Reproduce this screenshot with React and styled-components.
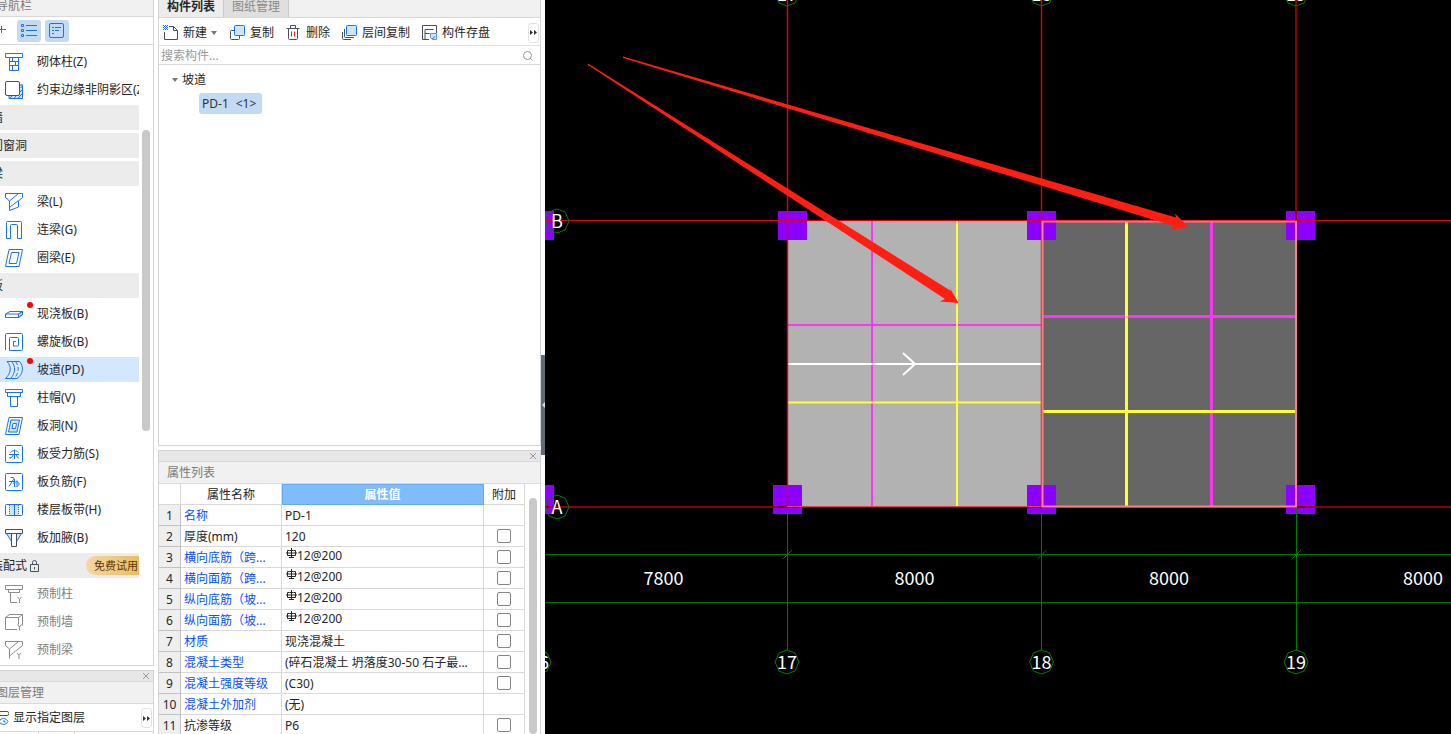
import React, { useState } from 'react';
import styled, { createGlobalStyle, css } from 'styled-components';

const GlobalStyle = createGlobalStyle`
  * {
    box-sizing: border-box;
  }

  html,
  body,
  #root {
    height: 100%;
    margin: 0;
  }

  body {
    overflow: hidden;
    background: #ffffff;
    color: #262626;
    font: 12px/20px "Noto Sans", "Noto Sans CJK SC", sans-serif;
  }

  button,
  input {
    font: inherit;
    color: inherit;
    margin: 0;
  }
`;

const Shell = styled.div`
  display: flex;
  height: 100vh;
  overflow: hidden;
`;

/* The docked navigation runs a little past the left edge of the window */
const Sidebar = styled.aside`
  display: flex;
  flex: none;
  flex-direction: column;
  gap: 4px;
  width: 170px;
  margin-left: -16px;
`;

const Dock = styled.section`
  display: flex;
  flex-direction: column;
  flex: ${({ $grow }) => ($grow ? '1 1 0' : 'none')};
  min-height: 0;
  overflow: hidden;
  border: solid #d4d4d4;
  border-width: ${({ $first }) => ($first ? '0 1px 1px' : '1px 1px 0')};
`;

const DockTitle = styled.h2`
  flex: none;
  height: ${({ $first }) => ($first ? '17px' : '22px')};
  margin: 0;
  padding-left: ${({ $inset }) => ($inset ? '11px' : '8px')};
  border-bottom: 1px solid #d9d9d9;
  background: #f1f1f1;
  color: #7a7a7a;
  font-size: 12px;
  font-weight: 400;
  line-height: ${({ $first }) => ($first ? '12px' : '21px')};
`;

const DockStrip = styled.div`
  display: flex;
  flex: none;
  justify-content: flex-end;
  align-items: center;
  height: 11px;
  padding-right: 3px;
  border-bottom: 1px solid #d9d9d9;
  background: #e7e7e7;
`;

const CloseButton = styled.button`
  display: flex;
  padding: 0;
  border: 0;
  background: none;
  color: #9a9a9a;
`;

const NavTools = styled.div`
  display: flex;
  flex: none;
  align-items: center;
  gap: 4px;
  height: 28px;
  padding-left: 4px;
  border-bottom: 1px solid #d9d9d9;
`;

const NavTool = styled.button`
  display: grid;
  place-items: center;
  width: 24px;
  height: 22px;
  padding: 0;
  border: 0;
  border-radius: 3px;
  background: ${({ $on }) => ($on ? '#c2daf2' : 'transparent')};
`;

const NavBody = styled.div`
  display: flex;
  flex: 1;
  min-height: 0;
`;

const NavList = styled.nav`
  display: flex;
  flex: 1;
  flex-direction: column;
  gap: 3px;
  min-width: 0;
  padding-top: 4px;
  overflow: hidden;
`;

const navRow = css`
  position: relative;
  display: flex;
  flex: none;
  align-items: center;
  height: 25px;
  overflow: hidden;
  white-space: nowrap;
`;

const NavItem = styled.a`
  ${navRow}
  gap: 14px;
  padding-left: 20px;
  background: ${({ $selected }) => ($selected ? '#d3e7ff' : 'transparent')};
  color: ${({ $locked }) => ($locked ? '#7f7f7f' : '#262626')};
  text-decoration: none;

  svg {
    flex: none;
  }
`;

const NavCategory = styled.h3`
  ${navRow}
  gap: 3px;
  margin: 0;
  padding-left: 6px;
  background: #ececec;
  font-size: 12px;
  font-weight: 400;
`;

const NewDot = styled.span`
  position: absolute;
  top: 1px;
  left: 42px;
  width: 6px;
  height: 6px;
  border-radius: 50%;
  background: #ff0000;
`;

const TrialButton = styled.button`
  width: 53px;
  height: 19px;
  margin-left: auto;
  padding: 0 0 0 8px;
  border: 0;
  border-radius: 10px 0 0 10px;
  background: linear-gradient(90deg, #f5d6a6, #e9bd60);
  color: #5d3408;
  font-size: 11px;
  line-height: 19px;
  text-align: left;
  white-space: nowrap;
`;

const Track = styled.div`
  flex: none;
  width: ${({ $narrow }) => ($narrow ? '15px' : '14px')};
  padding: ${({ $narrow }) => ($narrow ? '14px 3px 0 4px' : '85px 3px 0')};
`;

const Thumb = styled.div`
  height: ${({ $full }) => ($full ? '100%' : '301px')};
  border-radius: 4px;
  background: #c9c9c9;
`;

const LayerRow = styled.div`
  display: flex;
  flex: none;
  align-items: center;
  justify-content: space-between;
  height: 28px;
  padding: 1px 1px 0 12px;
  border-bottom: 1px solid #d9d9d9;
`;

const LayerButton = styled.button`
  display: flex;
  align-items: center;
  gap: 4px;
  padding: 0;
  border: 0;
  background: none;
  white-space: nowrap;
`;

const MoreButton = styled.button`
  display: grid;
  place-items: center;
  width: 11px;
  height: 20px;
  padding: 0;
  border: 1px solid #e4e4e4;
  border-radius: 3px;
  background: #ffffff;
  color: #333333;
`;

const LayerCells = styled.div`
  display: grid;
  grid-template-columns: 54px 36px 1fr;
  height: 2px;

  span {
    border-right: 1px solid #d9d9d9;
  }
`;

const Middle = styled.main`
  display: flex;
  flex: none;
  flex-direction: column;
  gap: 4px;
  width: 383px;
  margin-left: 4px;
`;

const Tabs = styled.div`
  display: flex;
  flex: none;
  height: 18px;
  border-bottom: 1px solid #d9d9d9;
  background: #f1f1f1;
`;

const Tab = styled.button`
  padding: 0 8px 3px;
  border: 0;
  border-right: 1px solid #c9c9c9;
  background: ${({ $active }) => ($active ? '#ececec' : '#dfdfdf')};
  color: ${({ $active }) => ($active ? '#262626' : '#8a8a8a')};
  font-weight: ${({ $active }) => ($active ? 700 : 400)};
  line-height: 12px;
`;

const ListTools = styled.div`
  display: flex;
  flex: none;
  align-items: center;
  gap: 12px;
  height: 28px;
  padding: 2px 1px 0 4px;
  border-bottom: 1px solid #e2e2e2;

  ${MoreButton} {
    margin-left: auto;
  }
`;

const ToolButton = styled.button`
  display: flex;
  align-items: center;
  gap: 4px;
  padding: 0;
  border: 0;
  background: none;
  white-space: nowrap;
`;

const SearchBox = styled.label`
  display: flex;
  flex: none;
  align-items: center;
  height: 19px;
  padding: 1px 6px 0 2px;
  border-bottom: 1px solid #d9d9d9;

  input {
    flex: 1;
    min-width: 0;
    height: 17px;
    padding: 0;
    border: 0;
    outline: 0;
    background: none;
  }

  input::placeholder {
    color: #999999;
    opacity: 1;
  }
`;

const Tree = styled.div`
  display: flex;
  flex: 1;
  flex-direction: column;
  align-items: flex-start;
  gap: 3px;
  min-height: 0;
  padding: 5px 0 0 13px;
`;

const TreeNode = styled.button`
  display: flex;
  align-items: center;
  gap: 3px;
  padding: 0;
  border: 0;
  background: none;
`;

const TreeLeaf = styled.button`
  display: flex;
  align-items: center;
  gap: 7px;
  height: 21px;
  margin-left: 27px;
  padding: 0 6px 0 3px;
  border: 0;
  border-radius: 3px;
  background: #c2daf2;
  color: #333333;
`;

const PropertyBody = styled.div`
  display: flex;
  height: 250px;
  overflow: hidden;
`;

const PropertyTable = styled.table`
  flex: 1;
  width: 100%;
  height: min-content;
  border-collapse: separate;
  border-spacing: 0;
  table-layout: fixed;

  th,
  td {
    height: 21px;
    padding: 2px 3px 0;
    overflow: hidden;
    border: solid #d9d9d9;
    border-width: 0 1px 1px 0;
    font-weight: 400;
    line-height: 18px;
    text-align: left;
    white-space: nowrap;
  }

  thead th {
    text-align: center;
  }
`;

const IndexCell = styled.th`
  && {
    padding: 2px 0 0;
    border-color: #c2c2c2;
    background: #efefef;
    text-align: center;
  }
`;

const NameCell = styled.td`
  color: ${({ $link }) => ($link ? '#0a50ff' : '#262626')};
`;

const ValueHead = styled.th`
  && {
    border-color: #66a9ee;
    background: #80bbfb;
    box-shadow: inset 1px 1px #66a9ee;
    color: #ffffff;
    font-weight: 700;
  }
`;

const ValueCell = styled.td`
  && {
    padding-top: ${({ $rebar }) => ($rebar ? '0' : '2px')};
    vertical-align: ${({ $rebar }) => ($rebar ? 'top' : 'middle')};
  }
`;

const RebarMark = styled.svg`
  width: 11px;
  height: 12px;
  margin-left: 1px;
`;

const CheckCell = styled.td`
  && {
    padding-top: 0;
  }
`;

const CheckBox = styled.input.attrs({ type: 'checkbox' })`
  appearance: none;
  display: block;
  width: 14px;
  height: 14px;
  margin: 0 auto;
  border: 1px solid #858585;
  border-radius: 2px;
  background: #ffffff;

  &:checked {
    background: #1b74e4;
  }
`;

const Splitter = styled.div`
  display: flex;
  flex: none;
  align-items: center;
  width: 4px;
  padding-top: 76px;
`;

const SplitHandle = styled.button`
  display: grid;
  place-items: center end;
  width: 4px;
  height: 100px;
  padding: 0;
  border: 0;
  background: #5f6b78;
`;

const Viewport = styled.section`
  flex: 1;
  min-width: 0;
  background: #000000;

  svg {
    display: block;
    width: 100%;
    height: 100%;
  }

  text {
    fill: #ffffff;
    font-family: "Noto Sans CJK SC", sans-serif;
    font-size: 18px;
    text-anchor: middle;
  }
`;

const BLUE = '#1b74e4';
const SLATE = '#46505f';
const TINT = '#cfe3fb';

const Glyph = ({ size = 18, color = BLUE, children }) => (
  <svg width={size} height={size} viewBox={`0 0 ${size} ${size}`} fill="none" stroke={color} aria-hidden="true">
    {children}
  </svg>
);

const icons = {
  masonry: (
    <Glyph>
      <path d="M.5.5h17v4H.5z" />
      <path d="M4.5 4.5v13h9v-13M4.5 8.5h9M4.5 12.5h9M7.5 4.5v4M10.5 8.5v4M7.5 12.5v5" />
    </Glyph>
  ),
  edge: (
    <Glyph>
      <path d="M15 3h2.500v14.500H4V15" fill={TINT} stroke="none" />
      <path d="M15 4h2.500v13.500H4V15M15.500 7l2-2M15 11l2.500-2.500M15 15l2.500-2.500M5 17l2-2M9 17.500l2-2.500M13 17.500l2-2.500" />
      <rect x=".5" y=".5" width="14" height="14" rx="1.500" stroke={SLATE} fill="#fff" />
    </Glyph>
  ),
  beam: (
    <Glyph>
      <path d="M.5 4.500v-4h17v4l-4 3.500v6L4.500 17.500V8zM4.500 8l9-7.500M4.500 14.500l9-7" />
    </Glyph>
  ),
  link: (
    <Glyph>
      <path d="M1.500 17.500v-16a1 1 0 0 1 1-1h13a1 1 0 0 1 1 1v16h-4V4.500a1 1 0 0 0-1-1h-5a1 1 0 0 0-1 1v13z" />
    </Glyph>
  ),
  ring: (
    <Glyph>
      <path d="M4 .5h13.500l-3.500 17H.5zM6.500 3.500h7.500l-2.500 11H4z" />
    </Glyph>
  ),
  slab: (
    <Glyph>
      <path d="M13.500 9l4-2.500v3l-4 3z" fill={TINT} />
      <path d="M.5 9l4.500-2.500h12.500v3l-4 3H.5zM.5 9h13l4-2.500M13.500 9v3.500" />
    </Glyph>
  ),
  spiral: (
    <Glyph>
      <path d="M.5 17V1.500a1 1 0 0 1 1-1h15a1 1 0 0 1 1 1v15a1 1 0 0 1-1 1h-12v-12a1 1 0 0 1 1-1h7a1 1 0 0 1 1 1V12a1 1 0 0 1-1 1H8.500V8.500H11" />
    </Glyph>
  ),
  ramp: (
    <Glyph>
      <path d="M2 .5c5 5 4 12-1.500 17H12C18.500 13 19 5.500 14.500.5z" fill="#dcecff" stroke="none" />
      <path d="M2 .5h4.500c4.500 5 4 12-1 17h-5C6 12.500 7 5.500 2 .5zM14.500.5C19 5.500 18.500 13 12 17.500H5.500M6.500.5h8" />
      <path d="M10.500.5c4 5 3.500 12-1.500 17" strokeDasharray="4 2" />
    </Glyph>
  ),
  cap: (
    <Glyph>
      <path d="M.5.5h17v3H.5zM2.500 3.500v4h13v-4M5.500 7.500v10h7v-10" />
    </Glyph>
  ),
  opening: (
    <Glyph>
      <path d="M4 .5h13.500l-3.500 17H.5z" />
      <path d="M6 3h8.500L12 15H3.500z" fill={TINT} />
      <path d="M8 6.500h3.500l-1 5H7z" fill="#fff" />
    </Glyph>
  ),
  rebarS: (
    <Glyph>
      <rect x=".5" y=".5" width="17" height="17" rx="1" />
      <path d="M5.500 7.500c2-2.500 6-2.500 8 0M4 9.500h10M4 13c3 0 4-1.500 4-4M9.500 4.500V14M11.500 9.500c0 2 1 3.500 2.500 3.500" />
    </Glyph>
  ),
  rebarF: (
    <Glyph>
      <rect x=".5" y=".5" width="17" height="17" rx="1" />
      <path d="M5.500 4.500H8c1 0 1 1 .5 2L4 13.500M4 8.500h5M9.500 6v8M8 10.500c3-2.500 6-2 6 0 0 2-1.500 3-3.500 3M12 7.500v5" />
    </Glyph>
  ),
  strip: (
    <Glyph>
      <path d="M4 3.500h10v11H4z" fill={TINT} stroke="none" />
      <rect x=".5" y="3.500" width="17" height="11" rx="1" />
      <path d="M9.500 3.500v11" />
      <path d="M4.500 4v11M13.500 4v11" strokeDasharray="1 1" />
    </Glyph>
  ),
  haunch: (
    <Glyph>
      <path d="M1.500 4.500l5 8v-8zM16.500 4.500l-5 8v-8z" fill={TINT} />
      <path d="M.5.5h17v4H.5zM6.500 4.500v13h5v-13" stroke={SLATE} fill="#fff" />
    </Glyph>
  ),
  precastColumn: (
    <Glyph color="#8c8c8c">
      <path d="M.5.5h17v4H.5zM3.500 4.500v3h11v-3M5.500 7.500v10H12M12.500 12l2 2.500 2-2.500M14.500 14.500V18" />
    </Glyph>
  ),
  precastWall: (
    <Glyph color="#8c8c8c">
      <path d="M12 16.500H.5v-12h13v7M.5 4.500l4-3h13v11M13.500 4.500l4-3M12.500 11.500l2 2.500 2-2.500M14.500 14v3.500" />
    </Glyph>
  ),
  precastBeam: (
    <Glyph color="#8c8c8c">
      <path d="M4.500 17.500V8L.5 4.500v-4h17v4L4.500 15M4.500 8l9-7.500M12 12l2 2.500 2-2.500M14 14.500V18" />
    </Glyph>
  ),
  create: (
    <Glyph size={16} color={SLATE}>
      <path d="M6 1.500h4.500l4 4v9H1.500V7M10.500 1.500v4h4" />
      <path d="M0 0h1v1H0zM2 0h1v1H2zM4 0h1v1H4zM1 1h1v1H1zM3 1h1v1H3zM0 2h1v1H0zM2 2h1v1H2zM4 2h1v1H4zM1 3h1v1H1zM3 3h1v1H3zM0 4h1v1H0zM2 4h1v1H2zM4 4h1v1H4z" stroke="none" fill={BLUE} />
    </Glyph>
  ),
  copy: (
    <Glyph size={16} color={SLATE}>
      <path d="M4 5.500H1.500a1 1 0 0 0-1 1v7a1 1 0 0 0 1 1h7a1 1 0 0 0 1-1V11" />
      <rect x="4.500" y=".5" width="10" height="10" rx="1" stroke={BLUE} fill={TINT} />
    </Glyph>
  ),
  remove: (
    <Glyph size={16} color={SLATE}>
      <path d="M.5 3.500h13M4.500 3V.500h5V3M2.500 3.500v10a1 1 0 0 0 1 1h7a1 1 0 0 0 1-1v-10" />
      <path d="M5.500 6.500v5M8.500 6.500v5" stroke="#e02020" />
    </Glyph>
  ),
  floorCopy: (
    <Glyph size={16} color={SLATE}>
      <path d="M.5 7v6.500a1 1 0 0 0 1 1H9M2.500 4v7.500a1 1 0 0 0 1 1H12" />
      <rect x="4.500" y=".5" width="10" height="10" rx="1" stroke={BLUE} fill={TINT} />
    </Glyph>
  ),
  store: (
    <Glyph size={16} color={SLATE}>
      <path d="M7 14.500H.5V.5h14V8M3 4.500h8.500M3 4.500v10M3 8.500h4.500" />
      <path d="M8.500 8.500h6v6h-4l-2-2z" stroke="#5b92e8" fill={TINT} />
      <path d="M10 14l3-2.500" stroke={BLUE} />
    </Glyph>
  ),
};

const CloseMark = () => (
  <svg width="8" height="8" viewBox="0 0 8 8" stroke="currentColor" aria-hidden="true">
    <path d="M1 1l6 6M7 1l-6 6" />
  </svg>
);

const MoreMark = () => (
  <svg width="7" height="5" viewBox="0 0 7 5" fill="currentColor" aria-hidden="true">
    <path d="M0 0l3 2.500L0 5zM4 0l3 2.500L4 5z" />
  </svg>
);

const Caret = () => (
  <svg width="7" height="4" viewBox="0 0 7 4" fill="#777" aria-hidden="true">
    <path d="M0 0h6L3 4z" />
  </svg>
);

const navRows = [
  { label: '砌体柱(Z)', icon: 'masonry' },
  { label: '约束边缘非阴影区(Z)', icon: 'edge' },
  { category: '墙' },
  { category: '门窗洞' },
  { category: '梁' },
  { label: '梁(L)', icon: 'beam' },
  { label: '连梁(G)', icon: 'link' },
  { label: '圈梁(E)', icon: 'ring' },
  { category: '板' },
  { label: '现浇板(B)', icon: 'slab', dot: true },
  { label: '螺旋板(B)', icon: 'spiral' },
  { label: '坡道(PD)', icon: 'ramp', dot: true, selected: true },
  { label: '柱帽(V)', icon: 'cap' },
  { label: '板洞(N)', icon: 'opening' },
  { label: '板受力筋(S)', icon: 'rebarS' },
  { label: '板负筋(F)', icon: 'rebarF' },
  { label: '楼层板带(H)', icon: 'strip' },
  { label: '板加腋(B)', icon: 'haunch' },
  { category: '装配式', trial: true },
  { label: '预制柱', icon: 'precastColumn', locked: true },
  { label: '预制墙', icon: 'precastWall', locked: true },
  { label: '预制梁', icon: 'precastBeam', locked: true },
];

const properties = [
  { name: '名称', value: 'PD-1', link: true },
  { name: '厚度(mm)', value: '120', check: true },
  { name: '横向底筋（跨...', value: '12@200', link: true, rebar: true, check: true },
  { name: '横向面筋（跨...', value: '12@200', link: true, rebar: true, check: true },
  { name: '纵向底筋（坡...', value: '12@200', link: true, rebar: true, check: true },
  { name: '纵向面筋（坡...', value: '12@200', link: true, rebar: true, check: true },
  { name: '材质', value: '现浇混凝土', link: true, check: true },
  { name: '混凝土类型', value: '(碎石混凝土 坍落度30-50 石子最...', link: true, check: true },
  { name: '混凝土强度等级', value: '(C30)', link: true, check: true },
  { name: '混凝土外加剂', value: '(无)', link: true },
  { name: '抗渗等级', value: 'P6', check: true },
];

const NavPanel = () => (
  <Dock $grow $first>
    <DockTitle $first $inset>导航栏</DockTitle>
    <NavTools>
      <NavTool aria-label="添加">
        <Glyph size={16}>
          <path d="M8.500 3v7M5 6.500h8M1 12.500h6" />
        </Glyph>
      </NavTool>
      <NavTool $on aria-label="列表">
        <Glyph size={16}>
          <path d="M.5 1.500h2v2h-2zM.5 6.500h2v2h-2zM.5 11.500h2v2h-2zM5 2.500h11M5 7.500h11M5 12.500h11" />
        </Glyph>
      </NavTool>
      <NavTool $on aria-label="详情">
        <Glyph size={16}>
          <rect x=".5" y=".5" width="14" height="14" rx="1.500" />
          <path d="M3 4.500h2M6 4.500h6M3 7.500h2M6 7.500h4M3 10.500h2" />
        </Glyph>
      </NavTool>
    </NavTools>
    <NavBody>
      <NavList>
        {navRows.map((row) =>
          row.category ? (
            <NavCategory key={row.category}>
              {row.category}
              {row.trial && (
                <>
                  <svg width="9" height="12" viewBox="0 0 9 12" fill="none" stroke={SLATE} aria-hidden="true">
                    <path d="M.5 4.500h8v7h-8zM2.500 4.500v-2a2 2 0 0 1 4 0v2M4.500 7v2.500" />
                  </svg>
                  <TrialButton>免费试用</TrialButton>
                </>
              )}
            </NavCategory>
          ) : (
            <NavItem key={row.label} href="#" $selected={row.selected} $locked={row.locked}>
              {icons[row.icon]}
              {row.label}
              {row.dot && <NewDot />}
            </NavItem>
          )
        )}
      </NavList>
      <Track>
        <Thumb />
      </Track>
    </NavBody>
  </Dock>
);

const LayerPanel = () => (
  <Dock>
    <DockStrip>
      <CloseButton aria-label="关闭图层管理">
        <CloseMark />
      </CloseButton>
    </DockStrip>
    <DockTitle $inset>图层管理</DockTitle>
    <LayerRow>
      <LayerButton>
        <svg width="12" height="16" viewBox="0 0 12 16" fill="none" stroke={BLUE} aria-hidden="true">
          <path d="M1 1.500h9a1.500 1.500 0 0 1 0 4H1" stroke={SLATE} />
          <path d="M2 11.500c2-4 7-4 9 0-2 4-7 4-9 0zM7 10v2h1.500" />
        </svg>
        显示指定图层
      </LayerButton>
      <MoreButton aria-label="更多图层工具">
        <MoreMark />
      </MoreButton>
    </LayerRow>
    <LayerCells>
      <span />
      <span />
    </LayerCells>
  </Dock>
);

const ComponentPanel = () => (
  <Dock $grow $first>
    <Tabs>
      <Tab $active>构件列表</Tab>
      <Tab>图纸管理</Tab>
    </Tabs>
    <ListTools>
      <ToolButton>
        {icons.create}
        新建
        <Caret />
      </ToolButton>
      <ToolButton>{icons.copy}复制</ToolButton>
      <ToolButton>{icons.remove}删除</ToolButton>
      <ToolButton>{icons.floorCopy}层间复制</ToolButton>
      <ToolButton>{icons.store}构件存盘</ToolButton>
      <MoreButton aria-label="更多工具">
        <MoreMark />
      </MoreButton>
    </ListTools>
    <SearchBox>
      <input type="text" aria-label="搜索构件" placeholder="搜索构件..." />
      <svg width="12" height="12" viewBox="0 0 12 12" fill="none" stroke="#999" aria-hidden="true">
        <circle cx="5.500" cy="5.500" r="4" />
        <path d="M8.500 8.500l2 2" />
      </svg>
    </SearchBox>
    <Tree>
      <TreeNode>
        <Caret />
        坡道
      </TreeNode>
      <TreeLeaf>
        <span>PD-1</span>
        <span>&lt;1&gt;</span>
      </TreeLeaf>
    </Tree>
  </Dock>
);

const PropertyPanel = () => {
  const [checked, setChecked] = useState({});

  return (
    <Dock>
      <DockStrip>
        <CloseButton aria-label="关闭属性列表">
          <CloseMark />
        </CloseButton>
      </DockStrip>
      <DockTitle>属性列表</DockTitle>
      <PropertyBody>
        <PropertyTable>
          <colgroup>
            <col width="22" />
            <col width="101" />
            <col />
            <col width="41" />
          </colgroup>
          <thead>
            <tr>
              <th aria-label="序号" />
              <th>属性名称</th>
              <ValueHead>属性值</ValueHead>
              <th>附加</th>
            </tr>
          </thead>
          <tbody>
            {properties.map((item, i) => (
              <tr key={item.name}>
                <IndexCell scope="row">{i + 1}</IndexCell>
                <NameCell $link={item.link}>{item.name}</NameCell>
                <ValueCell $rebar={item.rebar}>
                  {item.rebar && (
                    <RebarMark viewBox="0 0 11 12" fill="none" stroke="#262626" aria-hidden="true">
                      <path d="M5.500 0v10M3.500 2.500h-2v5h8v-5h-2M0 5h11M3.500 2.500h4M3 9.500h5" />
                    </RebarMark>
                  )}
                  {item.value}
                </ValueCell>
                <CheckCell>
                  {item.check && (
                    <CheckBox
                      aria-label={`附加 ${item.name}`}
                      checked={!!checked[i]}
                      onChange={(e) => setChecked({ ...checked, [i]: e.target.checked })}
                    />
                  )}
                </CheckCell>
              </tr>
            ))}
          </tbody>
        </PropertyTable>
        <Track $narrow>
          <Thumb $full />
        </Track>
      </PropertyBody>
    </Dock>
  );
};

// Drawing coordinates: x of the numbered axes, y of the lettered ones
const axes = [
  { x: -6, name: '16' },
  { x: 242, name: '17' },
  { x: 496.5, name: '18' },
  { x: 751, name: '19' },
];
const spans = [
  { x: 118.5, text: '7800' },
  { x: 369.5, text: '8000' },
  { x: 624, text: '8000' },
  { x: 878, text: '8000' },
];
const columns = [
  [-20, 211], [-20, 485],
  [233, 211], [228, 485],
  [482, 211], [482, 485],
  [741, 211], [741, 485],
];

const AxisBubble = ({ x, y, name }) => (
  <>
    <polygon
      points="0,-12 8,-9 12,0 8,9 0,12 -8,9 -12,0 -8,-9"
      transform={`translate(${x} ${y})`}
      fill="none"
      stroke="#008000"
    />
    <text x={x} y={y + 7}>{name}</text>
  </>
);

const PlanView = () => (
  <Viewport aria-label="平面图">
    <svg viewBox="0 0 906 734" preserveAspectRatio="xMinYMin slice">
      <rect x="242.500" y="220.500" width="254" height="286" fill="#b2b2b2" />
      <rect x="497" y="220.500" width="254" height="286" fill="#666666" />
      {columns.map(([x, y]) => (
        <rect key={`${x}-${y}`} x={x} y={y} width="29" height="29" fill="#8b00ff" />
      ))}

      <g stroke="#007a00">
        <path d="M0 554.500h906M0 602.500h906" />
        {axes.map(({ x }) => (
          <path key={x} d={`M${Math.floor(x) + 0.5} 507v143M${x - 4} 559l9-9`} />
        ))}
      </g>

      <g stroke="#ff35f5" strokeWidth="2">
        <path d="M243 325h254M327 221v286" />
        <path d="M496 316.500h256M666.500 220v288" strokeWidth="3" />
      </g>
      <g stroke="#ffff32" strokeWidth="2">
        <path d="M243 402.500h254M412 221v286" />
        <path d="M498 411.500h252M581.500 222v284" strokeWidth="3" />
      </g>
      <path d="M243 364h254M358 353l12 11-12 11" fill="none" stroke="#ffffff" strokeWidth="2" />

      <g stroke="#dc0012">
        <line x1="0" y1="220.500" x2="906" y2="220.500" />
        <line x1="242.500" y1="0" x2="242.500" y2="507" strokeWidth="1.400" />
        <line x1="496.500" y1="0" x2="496.500" y2="507" strokeWidth="1.400" />
      </g>
      <g stroke="#8c0000" strokeWidth="2">
        <line x1="0" y1="507" x2="906" y2="507" />
        <line x1="751" y1="0" x2="751" y2="220" />
      </g>
      <path d="M242 506.500h255" stroke="#e04050" />
      <path d="M497.500 221.500h253.500v285H497.500z" fill="none" stroke="#ff8080" strokeWidth="2" />
      <path d="M496 220.500h256" stroke="#ff2030" />

      {axes.map(({ x, name }) => (
        <React.Fragment key={name}>
          <AxisBubble x={x} y={662} name={name} />
          {x > 0 && <AxisBubble x={x} y={-6} name={name} />}
        </React.Fragment>
      ))}
      <AxisBubble x={12} y={221} name="B" />
      <AxisBubble x={12} y={507} name="A" />
      {spans.map(({ x, text }) => (
        <text key={x} x={x} y="585">{text}</text>
      ))}

      <g fill="#ff1f12">
        <path d="M43 63.500L406 291l-2-4.500L413.500 303l-18.500-1.500 5-2.500L43 65z" />
        <path d="M78 56.500L631 217.500l-1-4L643.500 227l-18.500 3 4-4L78 58z" />
      </g>
    </svg>
  </Viewport>
);

const App = () => (
  <>
    <GlobalStyle />
    <Shell>
      <Sidebar>
        <NavPanel />
        <LayerPanel />
      </Sidebar>
      <Middle>
        <ComponentPanel />
        <PropertyPanel />
      </Middle>
      <Splitter>
        <SplitHandle aria-label="折叠面板">
          <svg width="3" height="6" viewBox="0 0 3 6" fill="#d5dade" aria-hidden="true">
            <path d="M3 0v6L0 3z" />
          </svg>
        </SplitHandle>
      </Splitter>
      <PlanView />
    </Shell>
  </>
);

export default App;
